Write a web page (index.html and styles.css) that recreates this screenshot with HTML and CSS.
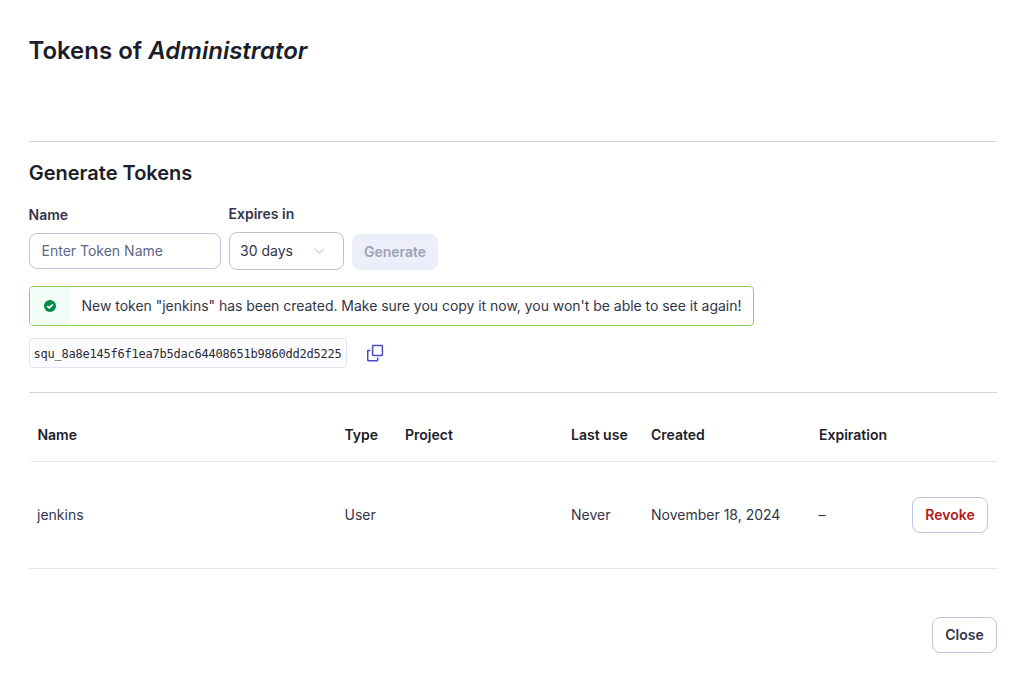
FILE: index.html
```html
<!DOCTYPE html>
<html lang="en">
<head>
<meta charset="utf-8">
<title>Tokens of Administrator</title>
<link rel="stylesheet" href="styles.css">
</head>
<body>
<main class="modal">
  <h1 class="title">Tokens of <em>Administrator</em></h1>
  <section class="generate">
    <h2 class="subtitle">Generate Tokens</h2>
    <form class="form">
      <div class="field name-field">
        <label class="label" for="token-name">Name</label>
        <input class="input" id="token-name" type="text" placeholder="Enter Token Name">
      </div>
      <div class="field expiry-field">
        <span class="label">Expires in</span>
        <div class="select">
          <span>30 days</span>
          <svg class="chevron" width="12" height="8" viewBox="0 0 12 8" fill="none" stroke="#b8b8be"><path d="M1.8 2 6.2 6.3 10.6 2"/></svg>
        </div>
      </div>
      <button class="button generate-button" type="button" disabled>Generate</button>
    </form>
    <div class="message">
      <span class="message-icon">
        <svg width="12" height="12" viewBox="0 0 12 12"><circle cx="6" cy="6" r="6" fill="#008a4b"/><path d="M3.2 6.1 5.2 7.9 8.9 4.3" fill="none" stroke="#fff" stroke-width="1.7"/></svg>
      </span>
      <span class="message-text">New token "jenkins" has been created. Make sure you copy it now, you won't be able to see it again!</span>
    </div>
    <div class="token-row">
      <code class="token">squ_8a8e145f6f1ea7b5dac64408651b9860dd2d5225</code>
      <svg class="copy" width="18" height="18" viewBox="0 0 18 18" fill="none" stroke="#4b4abf" stroke-width="1.5"><rect x="6.6" y="1.6" width="9.8" height="9.8" rx=".6"/><path d="M4.4 6.5H2.3q-.6 0-.6.6v9q0 .6.6.6h8.8q.6 0 .6-.6v-2.5"/></svg>
    </div>
  </section>
  <table class="tokens">
    <colgroup><col class="c-name"><col class="c-type"><col class="c-project"><col class="c-use"><col class="c-created"><col class="c-expiration"><col></colgroup>
    <thead>
      <tr><th class="gap-left gap-right">Name</th><th class="nudge">Type</th><th>Project</th><th>Last use</th><th class="gap-right">Created</th><th>Expiration</th><th class="gap-left"></th></tr>
    </thead>
    <tbody>
      <tr><td>jenkins</td><td class="nudge">User</td><td></td><td>Never</td><td>November 18, 2024</td><td class="nudge">–</td><td class="action"><button class="button revoke" type="button">Revoke</button></td></tr>
    </tbody>
  </table>
  <footer class="footer"><button class="button close" type="button">Close</button></footer>
</main>
</body>
</html>
```
FILE: styles.css
```css
* { box-sizing: border-box; }
body {
  margin: 0;
  background: #fff;
  color: #333549;
  font: 14px/20px Inter, sans-serif;
}
.modal { height: 674px; padding: 35px 15px 0 29px; overflow: hidden; }
.title {
  height: 106px;
  margin: 0 0 0 -0.6px;
  color: #1b1d2b;
  font-size: 24px;
  font-weight: 600;
  line-height: 32px;
}
.generate {
  height: 252px;
  padding-top: 17px;
  border: solid #d4d4d6;
  border-width: 1px 0;
}
.subtitle {
  margin: 0 0 0 -0.3px;
  color: #1b1d2b;
  font-size: 20px;
  font-weight: 600;
  line-height: 28px;
}
.form { display: flex; align-items: flex-end; gap: 8px; height: 83px; }
.field { display: flex; flex-direction: column; }
.name-field { width: 192px; gap: 8px; padding-bottom: 1px; }
.expiry-field { width: 115px; gap: 8px; }
.label { margin-left: -0.5px; font-weight: 600; }
.input {
  width: 100%;
  height: 36px;
  padding: 0 11px 2px 11.5px;
  border: 1px solid #bdc6df;
  border-radius: 8px;
  background: #fff;
  font: inherit;
}
.input::placeholder { color: #5c6787; opacity: 1; }
.select {
  display: flex;
  align-items: center;
  justify-content: space-between;
  height: 38px;
  padding: 0 18px 0 10px;
  border: 1px solid #c0c1c8;
  border-radius: 8px;
}
.button {
  height: 36px;
  padding: 0;
  border: 1px solid #bdc6df;
  border-radius: 8px;
  background: #fff;
  color: #333549;
  font: 600 14px/20px Inter, sans-serif;
}
.generate-button { width: 86px; border-color: #eceff9; background: #eceff9; color: #9ba2bc; }
.message {
  display: flex;
  width: 725px;
  height: 40px;
  margin-top: 16px;
  border: 1px solid #91ce55;
  border-radius: 4px;
  overflow: hidden;
}
.message-icon { display: grid; place-items: center; width: 40px; background: #f3fdf8; }
.message-text { padding: 9px 0 0 11.6px; letter-spacing: -0.03px; white-space: nowrap; }
.token-row { display: flex; align-items: center; gap: 19px; margin-top: 12px; }
.token {
  width: 318px;
  height: 30px;
  padding-left: 3.5px;
  border: 1px solid #dfe3f2;
  border-radius: 4px;
  background: #fcfcff;
  color: #2b2b33;
  font: 12px/30px "Ubuntu Mono", "DejaVu Sans Mono", monospace;
  font-family: "DejaVu Sans Mono", monospace;
  letter-spacing: -0.224px;
  white-space: nowrap;
}
.tokens { width: 968px; margin-top: 16px; table-layout: fixed; border-collapse: separate; border-spacing: 0; }
.tokens th, .tokens td { padding: 0 8px; border-bottom: 1px solid #e4e4e6; text-align: left; white-space: nowrap; }
.tokens th { height: 53px; color: #1b1d2b; font-weight: 600; }
.tokens td { height: 107px; }
.tokens .gap-left { border-left: 1px solid #fff; padding-left: 7.4px; }
.tokens .gap-right { border-right: 1px solid #fff; }
.tokens .nudge { padding-left: 7.5px; }
.c-name { width: 308px; }
.c-type { width: 60px; }
.c-project { width: 166px; }
.c-use { width: 80px; }
.c-created { width: 168px; }
.c-expiration { width: 92px; }
.tokens .action { padding-right: 9px; text-align: right; }
.revoke { width: 76px; color: #b01a1a; }
.footer { display: flex; justify-content: flex-end; padding-top: 48px; }
.close { width: 65px; }
```
